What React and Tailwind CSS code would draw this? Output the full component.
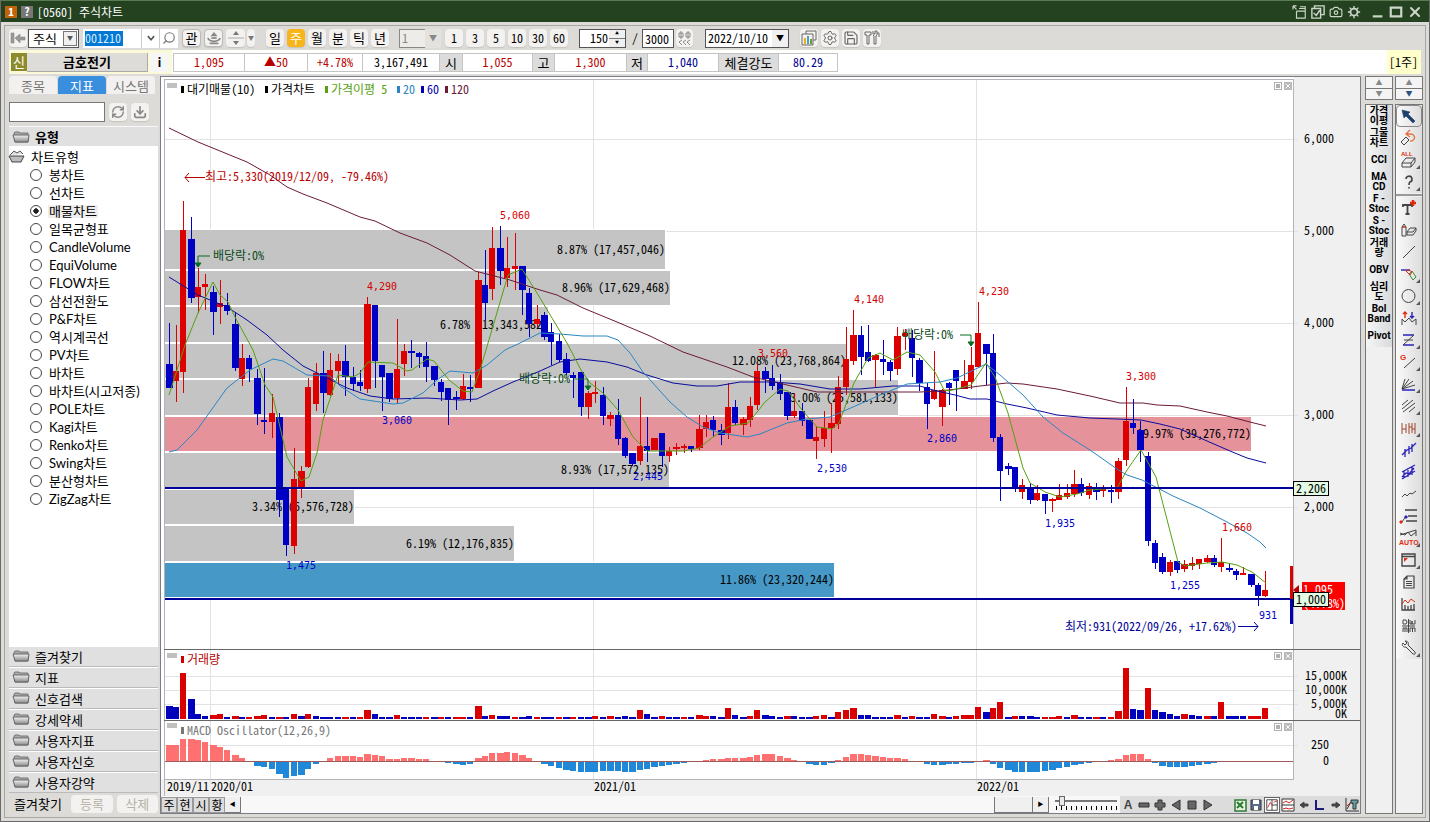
import { useState } from 'react';
import { Search, RefreshCw, Download, Settings, Save, Camera, X } from 'lucide-react';

// [high, bodyTop, bodyBottom, low, up]
const CANDLES = [
    [323, 364, 388, 388, 0], [325, 371, 381, 402, 1], [201, 230, 372, 393, 1], [217, 239, 298, 303, 0], [268, 287, 297, 313, 1],
    [274, 284, 287, 310, 1], [286, 292, 312, 335, 0], [280, 303, 307, 324, 1], [293, 305, 311, 315, 0], [312, 324, 368, 371, 0],
    [344, 358, 379, 386, 1], [355, 358, 369, 382, 0], [369, 378, 414, 425, 0], [368, 420, 422, 434, 0], [394, 413, 422, 438, 1],
    [413, 417, 500, 517, 0], [487, 487, 545, 556, 0], [448, 479, 546, 554, 1], [466, 471, 487, 498, 1], [378, 387, 467, 468, 1],
    [363, 373, 404, 411, 1], [351, 373, 393, 413, 0], [353, 370, 395, 396, 1], [354, 361, 371, 383, 1], [345, 361, 377, 396, 0],
    [367, 377, 384, 391, 0], [370, 382, 386, 391, 0], [297, 304, 389, 393, 1], [305, 305, 361, 388, 0], [365, 365, 377, 411, 0],
    [373, 373, 399, 402, 0], [319, 369, 398, 404, 1], [344, 351, 364, 376, 1], [340, 351, 353, 368, 0], [352, 353, 357, 368, 0],
    [342, 356, 367, 382, 0], [366, 366, 380, 386, 0], [379, 382, 392, 401, 0], [388, 388, 400, 425, 0], [391, 397, 399, 410, 0],
    [374, 386, 399, 400, 1], [375, 387, 388, 402, 0], [272, 280, 388, 388, 1], [250, 285, 303, 320, 0], [227, 248, 289, 300, 1],
    [226, 248, 271, 285, 0], [237, 268, 278, 287, 1], [233, 266, 269, 290, 1], [266, 266, 290, 315, 0], [288, 293, 324, 337, 0],
    [305, 319, 324, 327, 1], [312, 315, 337, 340, 0], [323, 332, 342, 365, 0], [334, 341, 360, 362, 0], [353, 359, 373, 375, 0],
    [372, 375, 378, 398, 0], [372, 372, 407, 416, 0], [391, 393, 407, 419, 1], [381, 392, 394, 403, 1], [387, 395, 416, 425, 0],
    [412, 415, 419, 426, 1], [399, 415, 439, 445, 0], [437, 438, 456, 458, 0], [453, 453, 464, 466, 0], [397, 446, 461, 465, 1],
    [417, 446, 451, 462, 0], [438, 438, 450, 450, 1], [433, 433, 456, 467, 0], [447, 451, 456, 462, 1], [443, 447, 449, 455, 1],
    [444, 446, 448, 453, 1], [446, 446, 449, 452, 0], [415, 429, 448, 450, 1], [415, 422, 429, 437, 1], [416, 420, 430, 437, 0],
    [424, 430, 435, 445, 0], [383, 407, 433, 439, 1], [400, 407, 423, 425, 0], [417, 419, 425, 435, 1], [397, 406, 420, 427, 1],
    [364, 371, 405, 410, 1], [367, 371, 379, 393, 0], [365, 378, 386, 390, 0], [374, 383, 394, 400, 0], [392, 392, 416, 420, 0],
    [393, 411, 416, 418, 1], [403, 411, 421, 426, 0], [420, 420, 439, 439, 0], [427, 437, 441, 459, 1], [411, 428, 439, 447, 1],
    [403, 423, 428, 453, 1], [376, 387, 424, 429, 1], [327, 359, 387, 395, 1], [310, 335, 361, 365, 1], [326, 335, 357, 375, 0],
    [325, 352, 361, 362, 0], [354, 355, 360, 387, 1], [340, 359, 362, 375, 0], [360, 362, 371, 381, 0], [327, 336, 369, 375, 1],
    [329, 333, 336, 350, 1], [330, 338, 358, 377, 0], [358, 360, 383, 391, 0], [383, 387, 404, 429, 0], [351, 390, 399, 400, 1],
    [389, 390, 407, 426, 1], [382, 383, 388, 405, 0], [370, 370, 381, 411, 0], [360, 381, 389, 389, 1], [347, 365, 382, 389, 1],
    [302, 333, 367, 367, 1], [344, 344, 354, 385, 0], [334, 353, 438, 442, 0], [434, 437, 471, 501, 0], [463, 466, 469, 475, 0],
    [467, 467, 488, 492, 0], [479, 485, 492, 499, 1], [483, 487, 500, 504, 0], [485, 493, 500, 501, 1], [494, 494, 501, 514, 0],
    [498, 499, 501, 512, 1], [484, 495, 500, 500, 1], [484, 493, 497, 499, 1], [470, 484, 494, 497, 1], [478, 484, 493, 496, 0],
    [483, 486, 495, 499, 1], [483, 489, 492, 500, 0], [485, 489, 491, 497, 1], [485, 490, 491, 503, 0], [458, 461, 492, 499, 1],
    [387, 421, 460, 466, 1], [399, 423, 428, 434, 0], [421, 430, 450, 462, 0], [452, 456, 541, 546, 0], [540, 543, 563, 569, 0],
    [553, 557, 572, 574, 0], [560, 562, 572, 576, 1], [561, 561, 570, 573, 0], [560, 564, 569, 572, 1], [557, 563, 566, 570, 1],
    [559, 559, 564, 569, 1], [555, 558, 562, 563, 1], [555, 558, 565, 567, 0], [538, 562, 567, 572, 1], [564, 568, 570, 572, 0],
    [569, 571, 575, 580, 0], [567, 573, 575, 575, 1], [574, 574, 585, 587, 0], [583, 585, 596, 606, 0], [571, 590, 596, 597, 1],
];

const VOLUMES = [
    13, 12, 46, 20, 5, 3, 4, 5, 2, 3, 2, 2, 3, 4, 2, 2, 2, 5, 3, 5, 3, 2, 2, 2, 2, 2, 2, 9, 5, 2,
    2, 4, 2, 2, 2, 2, 2, 2, 2, 2, 2, 2, 13, 3, 4, 3, 3, 2, 2, 3, 2, 2, 2, 2, 2, 2, 2, 2, 3, 2,
    3, 2, 3, 2, 9, 5, 2, 3, 2, 2, 2, 2, 4, 3, 3, 2, 11, 4, 2, 3, 9, 4, 3, 2, 3, 3, 2, 2, 3, 4,
    2, 7, 9, 11, 4, 4, 2, 2, 2, 4, 2, 3, 2, 2, 5, 3, 2, 3, 4, 4, 12, 7, 11, 17, 2, 3, 3, 3, 2, 2,
    2, 3, 2, 4, 2, 2, 2, 2, 2, 8, 51, 10, 9, 31, 9, 7, 5, 3, 5, 4, 3, 3, 3, 17, 3, 3, 3, 3, 3, 11,
];

const VOLUME_SIGNS =
    'bbrbbbrrbrbrrrbrbrbrbbbbrbrrbb' +
    'brbbbrbrbrrbrbrbbrbbrbbrbrbbrb' +
    'rbbbrbbrbbrbrrbbrbbrrbbbrbbbrr' +
    'brrrbbbbbrbrbbrrbrrrrbrrbrbbbr' +
    'rrbrbbrbrrrbbrbbbbrbbrbrbbbrrr';

const MACD = [
    16, 16, 22, 22, 21, 19, 16, 14, 11, 6, 3, 0, -5, -6, -8, -13, -17, -15, -14, -8, -3, 0, 3, 5, 5, 5, 4, 7, 6, 5,
    2, 2, 3, 3, 2, 2, 0, -1, -2, -3, -4, -3, 3, 5, 8, 8, 9, 8, 6, 3, -1, -3, -5, -7, -9, -10, -11, -11, -11, -10,
    -10, -10, -11, -11, -9, -8, -6, -5, -4, -3, -2, -1, 0, 1, 2, 2, 3, 3, 3, 4, 6, 7, 7, 5, 3, 1, -1, -3, -4, -4,
    -2, 1, 4, 7, 7, 6, 5, 4, 3, 3, 2, 0, -1, -3, -4, -4, -3, -3, -2, -2, 0, 1, -3, -7, -9, -11, -11, -11, -11, -10,
    -9, -7, -6, -4, -3, -2, -1, 0, 1, 2, 6, 7, 7, 2, -2, -5, -6, -6, -6, -5, -4, -3, -2, -1, -1, -1, 0, 0, -1, 0,
];

const MA_LINES = [
    {
        color: '#6b1a3a',
        points: '169,128 198,142 247,162 270,175 287,187 303,194 327,203 360,217 375,221 400,233 427,243 450,255 475,271 510,280 540,290 557,295 583,308 617,322 650,336 683,352 727,367 753,377 787,385 817,392 860,392 920,392 940,391 957,389 980,386 1007,383 1023,384 1057,389 1090,396 1120,403 1143,403 1157,405 1180,406 1207,412 1227,416 1250,422 1266,426',
    },
    {
        color: '#0a0aa0',
        points: '169,277 198,295 227,307 247,320 267,335 283,350 303,366 327,378 347,388 370,396 393,399 427,398 460,400 477,399 493,391 513,382 540,371 560,362 580,359 607,362 627,367 647,375 673,383 697,386 717,386 740,382 773,382 800,384 830,389 860,389 893,386 920,386 933,390 955,395 970,399 987,399 1007,404 1027,408 1057,415 1090,418 1117,419 1141,420 1160,424 1180,429 1207,441 1230,451 1247,458 1266,463',
    },
    {
        color: '#2a86c4',
        points: '169,452 177,450 197,430 227,388 250,370 273,359 283,361 307,375 330,376 340,386 360,399 393,404 403,403 423,393 437,380 450,371 473,373 487,365 505,350 520,343 540,333 560,334 583,336 607,336 618,340 630,353 643,372 670,402 687,417 703,427 720,433 747,437 760,434 787,423 807,419 830,417 853,407 880,395 907,384 940,382 957,378 986,364 1000,375 1023,395 1043,417 1063,433 1090,450 1117,469 1127,475 1142,480 1173,496 1200,508 1227,522 1247,533 1260,542 1266,548',
    },
    {
        color: '#56a010',
        points: '169,395 185,345 198,313 213,282 220,295 228,302 235,317 253,350 265,385 273,397 287,457 301,481 309,477 317,453 323,420 338,375 353,377 360,373 368,362 393,363 407,371 412,370 427,359 434,361 449,380 463,391 472,392 480,370 486,350 508,275 522,269 537,293 567,343 581,370 590,383 603,393 618,410 633,437 647,451 683,451 699,448 713,437 730,426 748,423 758,411 765,402 780,389 788,391 802,410 817,427 832,429 839,423 854,383 868,358 880,353 893,360 907,352 920,355 935,372 944,390 949,391 971,385 986,363 995,377 1008,413 1023,468 1030,483 1045,492 1060,497 1077,494 1090,490 1117,488 1127,470 1141,450 1156,477 1178,562 1185,566 1207,563 1222,562 1237,565 1252,572 1266,583',
    },
];

// price zones: y, height, right edge, label
const ZONES = [
    [230, 39, 665, '8.87% (17,457,046)', '#c4c4c4'],
    [271, 34, 670, '8.96% (17,629,468)', '#c4c4c4'],
    [307, 35, 548, '6.78% (13,343,582)', '#c4c4c4'],
    [344, 34, 846, '12.08% (23,768,864)', '#c4c4c4'],
    [380, 35, 898, '13.00% (25,581,133)', '#c4c4c4'],
    [417, 34, 1251, '19.97% (39,276,772)', '#e5929a'],
    [453, 34, 669, '8.93% (17,572,135)', '#c4c4c4'],
    [490, 34, 354, '3.34% (6,576,728)', '#c4c4c4'],
    [526, 35, 514, '6.19% (12,176,835)', '#c4c4c4'],
    [563, 34, 834, '11.86% (23,320,244)', '#4698c6'],
];

const HIGHS = [[367, 290, '4,290'], [500, 219, '5,060'], [758, 357, '3,560'], [854, 303, '4,140'], [979, 295, '4,230'], [1126, 380, '3,300'], [1222, 531, '1,660']];
const LOWS = [[286, 569, '1,475'], [382, 424, '3,060'], [633, 480, '2,445'], [817, 472, '2,530'], [927, 442, '2,860'], [1045, 527, '1,935'], [1170, 589, '1,255'], [1259, 619, '931']];

const DIVIDENDS = [
    { x: 213, y: 260, line: '210,256 198,256 198,266', tip: '195,263 198,267 201,263' },
    { x: 519, y: 383, line: '574,379 588,379 588,389', tip: '585,386 588,390 591,386' },
    { x: 902, y: 339, line: '960,335 971,335 971,345', tip: '968,342 971,346 974,342' },
];

const PRICE_TICKS = [[139, '6,000'], [231, '5,000'], [323, '4,000'], [415, '3,000'], [507, '2,000']];
const MONTHS = [[167, '2019/11'], [211, '2020/01'], [594, '2021/01'], [977, '2022/01']];

const LEGEND = [
    [181, '#000000', '대기매물(10)'],
    [265, '#000000', '가격차트'],
    [325, '#56a010', '가격이평 5'],
    [397, '#2a86c4', '20'],
    [421, '#0000b0', '60'],
    [445, '#6b1a3a', '120'],
];

const CHART_TYPES = [
    '봉차트', '선차트', '매물차트', '일목균형표', 'CandleVolume', 'EquiVolume', 'FLOW차트', '삼선전환도', 'P&F차트', '역시계곡선',
    'PV차트', '바차트', '바차트(시고저종)', 'POLE차트', 'Kagi차트', 'Renko차트', 'Swing차트', '분산형차트', 'ZigZag차트',
];

const GROUPS = ['즐겨찾기', '지표', '신호검색', '강세약세', '사용자지표', '사용자신호', '사용자강약'];

const QUOTE = [
    { text: '1,095', cls: 'w-[71px] text-[#b80000]' },
    { text: '▲50', cls: 'w-[63px] text-[#b80000]' },
    { text: '+4.78%', cls: 'w-[55px] text-[#b80000]' },
    { text: '3,167,491', cls: 'w-[77px] text-black' },
    { text: '시', cls: 'w-[23px]', head: true },
    { text: '1,055', cls: 'w-[70px] text-[#b80000]' },
    { text: '고', cls: 'w-[22px]', head: true },
    { text: '1,300', cls: 'w-[72px] text-[#b80000]' },
    { text: '저', cls: 'w-[21px]', head: true },
    { text: '1,040', cls: 'w-[71px] text-[#000090]' },
    { text: '체결강도', cls: 'w-[60px]', head: true },
    { text: '80.29', cls: 'w-[59px] text-[#000090]' },
];

const INDICATORS = [
    ['가격', '이평'], ['그물', '차트'], ['CCI'], ['MA', 'CD'], ['F -', 'Stoc'], ['S -', 'Stoc'], ['거래', '량'], ['OBV'], ['심리', '도'], ['Bol', 'Band'], ['Pivot'],
];

const G = '#444444';
const B = '#2a22b8';
const R = '#e02a10';

const DRAW_TOOLS = [
    { name: '선택', more: false, icon: <path d="M1 2l2 8 2-2 7 7 2-2-7-7 2-2z" fill="#1d3f6e" stroke="#1d3f6e" strokeWidth=".6" /> },
    { name: '지우기', more: false, icon: <><path d="M0 12l5-5 3 3-5 5z" stroke={G} /><path d="M6 4h4a4 3.500 0 1 1-1 7M9 0L5 4l4 3" stroke="#e8703a" strokeWidth="1.3" /></> },
    { name: '전체지우기', more: true, icon: <><text x="0" y="4" fontSize="6" fontWeight="700" fill={R} stroke="none">ALL</text><path d="M1 11l4-5h9l-4 5zM1 11v4h9l4-5V6M10 11v4" stroke={G} /></> },
    { name: '도움말', more: true, icon: <path d="M5 5a3 3 0 1 1 4 3c-1 .5-1 1-1 3M8 13v1.500" stroke={G} strokeWidth="1.6" /> },
    null,
    { name: '문자', more: false, icon: <><path d="M2 7V5h9v2M6.500 5v9M4.500 14h4" stroke={G} strokeWidth="1.8" /><path d="M12 0v6M9 3h6" stroke={R} strokeWidth="2.500" /></> },
    { name: '도형', more: false, icon: <><path d="M1 5h4v9H1zM1 5l2-3 2 3" stroke={G} /><path d="M1 5h4" stroke={R} /><path d="M6 10l3-4h6l-3 4zM6 10v3h6l3-4V6" stroke={G} /></> },
    { name: '추세선', more: false, icon: <path d="M2 14L14 2" stroke={G} /> },
    { name: '선편집', more: true, icon: <><path d="M0 4h9" stroke={B} strokeWidth="1.4" /><path d="M8 8l3-3 4 6-3 3z" stroke="#3a8a3a" /><path d="M5 5l3-1 3 2-2 3z" stroke={R} /></> },
    { name: '원', more: true, icon: <circle cx="7.500" cy="8" r="6.500" stroke={G} /> },
    { name: '고저', more: false, icon: <><path d="M1 15V9l3 3 4-4 3 4 4-3v6" stroke={G} /><path d="M4 8V2M2 4l2-2 2 2" stroke={R} strokeWidth="1.4" /><path d="M11 2v6M9 6l2 2 2-2" stroke={B} strokeWidth="1.4" /></> },
    { name: '지그재그', more: true, icon: <><path d="M2 3h11M2 13h11" stroke={B} strokeWidth="1.4" /><path d="M13 3L2 13M3 8h9" stroke={G} /></> },
    { name: '각도선', more: true, icon: <><text x="-1" y="6" fontSize="8" fontWeight="700" fill={R} stroke="none">G</text><path d="M3 14L14 4" stroke={G} /></> },
    { name: '부채꼴', more: true, icon: <><path d="M1 13L4 3M1 13l7-10M1 13l11-8M1 13l13-4" stroke={G} /><path d="M1 14h13" stroke={B} strokeWidth="1.5" /></> },
    { name: '평행선', more: true, icon: <path d="M1 7l6-5M1 11L12 2M2 14L14 5M8 14l6-5" stroke={G} /> },
    { name: '주기선', more: true, icon: <path d="M1 3v11M1 9h4M5 4v9M8 3v11M8 7h3M11 3v10M14 3v11M11 9h3" stroke="#a0442a" /> },
    { name: '채널', more: false, icon: <path d="M1 13l5-5 4-2 5-5M4 7v8M8 4v8M11 2v8" stroke={B} strokeWidth="1.3" /> },
    { name: '이중채널', more: false, icon: <path d="M1 15L14 7M1 8L14 1M3 7v7M7 4v9M11 2v9M1 13l4-4 3 1 5-6" stroke={B} strokeWidth="1.3" /> },
    { name: '파동', more: false, icon: <path d="M1 11l3-3 2 2 3-3 2 1 4-3" stroke={G} /> },
    { name: '되돌림', more: false, icon: <><path d="M4 2h12M7 8h9M5 13h11" stroke={G} strokeWidth="1.3" /><path d="M1 14l4-6" stroke={G} /><path d="M-1 13h2v2h-2z" fill={R} stroke={R} /><path d="M4 8h2v2H4z" fill={B} stroke={B} /></> },
    { name: '자동', more: true, icon: <><path d="M-1 5L15 0v6M-1 3l5 2 3-3 3 4 5-4" stroke={G} /><text x="-2" y="15" fontSize="7" fontWeight="700" fill={R} stroke="none">AUTO</text></> },
    { name: '창', more: true, icon: <><path d="M1 2h13v12H1zM1 4.500h13" stroke={G} strokeWidth="1.4" /><path d="M3 6h4L3 10z" fill={R} stroke="none" /></> },
    { name: '메모', more: false, icon: <path d="M6 2h7v12H3V5zM6 2v3H3M5 7.500h6M5 9.500h6M5 11.500h6" stroke={G} strokeWidth="1.2" /> },
    { name: '차트', more: false, icon: <><path d="M1 2v12h13M4 14V9M7 14v-4M10 14V9M13 14V8" stroke={G} strokeWidth="1.3" /><path d="M1 8l3-4 3 3 3-4 4 3" stroke={R} /></> },
    { name: 'DWM', more: false, icon: <path d="M2 2v4h3l1-2-1-2zM9 2v4h2V3v3h3V2M1 8h13M7.500 1v14M2 14v-4h4v4M4 10v4M9 14v-4h5v4M11.500 10v4" stroke={G} /> },
    { name: '설정', more: true, icon: <path d="M2 3l2 2 2-2-2-2c3 0 4 2 3 4l7 7c1 2-1 3-2 2L5 7C3 8 0 5 2 3z" stroke={G} /> },
];

const chip = 'flex items-center justify-center h-[18px] rounded-sm bg-[#f3f2f0] shadow-[0_1px_1px_#c4c2be]';

function Icon({ children, size = 'size-4' }) {
    return <svg className={`${size} shrink-0 overflow-visible font-['Liberation_Sans',sans-serif]`} viewBox="0 0 16 16" fill="none">{children}</svg>;
}

function Folder() {
    return (
        <Icon>
            <path d="M1 4l1-1h4l1 1h8v9H2z" fill="#aaa" stroke="#777" />
            <path d="M0 6h16l-1 7H2z" fill="url(#folderFill)" stroke="#666" />
            <defs>
                <linearGradient id="folderFill" x1="0" y1="0" x2="0" y2="1">
                    <stop offset="0" stopColor="#f4f4f4" />
                    <stop offset="1" stopColor="#8a8a8a" />
                </linearGradient>
            </defs>
        </Icon>
    );
}

function TitleBar() {
    return (
        <header className="flex items-center h-[22px] px-1 bg-[#24421f] border-t border-[#5a7a52] text-white">
            <span className="flex items-center justify-center size-3 bg-[#c0640c] text-[11px] font-bold">1</span>
            <span className="flex items-center justify-center size-3 ml-1 bg-[#777] text-[11px] font-bold">?</span>
            <h1 className="ml-1 text-xs">[0560] 주식차트</h1>
            <div className="flex items-center gap-1 ml-auto mr-0.5 text-[#cdd6ca]">
                <button aria-label="분리"><Icon size="size-3.5"><path d="M0 1h4M0 1v4M0 1l4 4M4 7v8h10V4H7M4 7h10M8 2h6v2" stroke="currentColor" strokeWidth="1.3" /></Icon></button>
                <button aria-label="복사"><Icon size="size-3.5"><path d="M1 4h10v11H1zM4 4V1h11v10h-4M3 9l3 3 4-6" stroke="currentColor" strokeWidth="1.6" /></Icon></button>
                <button aria-label="캡처"><Camera className="size-3.5" /></button>
                <button aria-label="설정"><Icon size="size-3.5"><circle cx="8" cy="8" r="4" stroke="currentColor" strokeWidth="2" /><path d="M8 1v3M8 12v3M1 8h3M12 8h3M3 3l2 2M11 11l2 2M3 13l2-2M11 5l2-2" stroke="currentColor" strokeWidth="1.6" /></Icon></button>
                <button aria-label="최소화" className="ml-1.5"><Icon size="size-3.5"><path d="M2 13h11" stroke="currentColor" strokeWidth="2.500" /></Icon></button>
                <button aria-label="최대화"><Icon size="size-3.5"><path d="M2 3h12v10H2z" stroke="currentColor" strokeWidth="2.500" /></Icon></button>
                <button aria-label="닫기"><X className="size-4" strokeWidth={3} /></button>
            </div>
        </header>
    );
}

function Toolbar() {
    const [period, setPeriod] = useState('주');
    return (
        <div className="flex items-center h-6 px-1 text-xs">
            <button aria-label="이전" className={`${chip} w-[18px]`}>
                <Icon><path d="M1 3h3v10H1zM5 8l5-4v3h5v3h-5v3z" fill="#999" stroke="#888" strokeWidth=".6" /></Icon>
            </button>
            <div className="relative ml-px">
                <select aria-label="종류" className="appearance-none w-[51px] h-[19px] pl-1 bg-white border border-[#555] text-[13px] leading-none">
                    <option>주식</option>
                </select>
                <span className="absolute right-0.5 top-0.5 flex items-center justify-center w-3.5 h-[15px] border border-[#777] bg-[#f0f0f0] text-[6px] text-[#555] pointer-events-none">▼</span>
            </div>
            <div className="flex items-center ml-1 h-[19px] bg-white">
                <input aria-label="종목코드" defaultValue="001210" className="w-[38px] h-[15px] ml-0.5 bg-[#0078d4] text-[#d8ecff]" />
                <button aria-label="종목 목록" className="flex items-center justify-center w-[18px] h-full ml-[18px] border-l border-[#ccc]">
                    <Icon size="size-2.5"><path d="M3 5l5 6 5-6" stroke="#555" strokeWidth="2.500" /></Icon>
                </button>
                <button aria-label="검색" className="flex items-center justify-center w-[19px] h-full border-l border-[#ccc]"><Search className="size-3.5 -scale-x-100" color="#777" /></button>
            </div>
            <button className={`${chip} w-[19px] ml-1 border border-[#bbb] text-[13px]`}>관</button>
            <button aria-label="투자자" className={`${chip} w-[19px] ml-[3px] border border-[#bbb]`}>
                <Icon size="size-3.5"><path d="M8 1l4 5H4z" fill="#888" /><path d="M1 8c2 5 12 5 14 0M3 14h10" stroke="#888" strokeWidth="2" /><path d="M5 8h6" stroke="#888" strokeWidth="2" /></Icon>
            </button>
            <button aria-label="위아래" className={`${chip} w-[19px] ml-[3px]`}>
                <Icon><path d="M8 1l3 4H5zM8 15l3-4H5z" fill="#777" /><path d="M0 8h16" stroke="#aaa" /></Icon>
            </button>
            <button aria-label="더보기" className={`${chip} w-2 ml-0.5 text-[6px] text-[#777]`}>▼</button>
            <div className="flex gap-[3px] ml-[11px]">
                {['일', '주', '월', '분', '틱', '년'].map(p => (
                    <button
                        key={p}
                        onClick={() => setPeriod(p)}
                        className={`${chip} w-[18px] text-[13px] ${period === p ? '!bg-[#f7b51c] text-white' : ''}`}
                    >
                        {p}
                    </button>
                ))}
            </div>
            <div className="relative ml-[10px]">
                <select aria-label="주기" disabled className="appearance-none w-[42px] h-[19px] pl-0.5 bg-[#eeece8] border border-[#888] text-[#888] opacity-100">
                    <option>1</option>
                </select>
                <span className="absolute right-0 top-0 flex items-center justify-center w-4 h-[19px] bg-[#e4e2de] text-[8px] text-[#888] pointer-events-none">▼</span>
            </div>
            <div className="flex gap-[3px] ml-1">
                {['1', '3', '5', '10', '30', '60'].map(n => <button key={n} className={`${chip} w-[18px]`}>{n}</button>)}
            </div>
            <div className="flex h-[19px] ml-[11px] bg-white border border-[#555]">
                <input aria-label="표시 봉수" defaultValue="150" className="w-7 text-right" />
                <div className="flex flex-col w-4 ml-px bg-[#f0f0f0] text-[4px]">
                    <button aria-label="증가" className="flex-1 border-b border-[#777]">▲</button>
                    <button aria-label="감소" className="flex-1">▼</button>
                </div>
            </div>
            <span className="ml-1.5">/</span>
            <input aria-label="전체 봉수" defaultValue="3000" className="w-8 h-[19px] ml-1 pl-0.5 bg-white border border-[#555] leading-none" />
            <button aria-label="봉 조절" className={`${chip} w-[17px] ml-0.5`}>
                <Icon><path d="M4 1v8M2 3h4v4H2zM11 1v8M9 3h4v4H9zM5 10l-3 2 3 3M9 10l-3 2 3 3M13 10l-3 2 3 3" stroke="#888" /></Icon>
            </button>
            <div className="relative ml-3">
                <select aria-label="기준일" className="appearance-none w-[84px] h-[19px] pl-0.5 bg-white border border-[#555]">
                    <option>2022/10/10</option>
                </select>
                <span className="absolute right-px top-px flex items-center justify-center w-4 h-[17px] bg-[#f0f0f0] text-[8px] pointer-events-none">▼</span>
            </div>
            <div className="flex gap-[3px] ml-[11px]">
                <button aria-label="차트 종류" className={`${chip} w-[18px]`}><Icon><path d="M5 4V1h10v9h-3M1 4h11v11H1z" stroke="#666" /><path d="M3 8h2v6H3z" fill="#e8b020" /><path d="M6 6h2v8H6z" fill="#4aa0c0" /><path d="M9 9h2v5H9z" fill="#60a040" /></Icon></button>
                <button aria-label="환경설정" className={`${chip} w-[18px]`}><Settings className="size-4" color="#666" strokeWidth={1.5} /></button>
                <button aria-label="저장" className={`${chip} w-[18px]`}><Save className="size-4" color="#666" strokeWidth={1.7} /></button>
                <button aria-label="도구" className={`${chip} w-[18px]`}><Icon><path d="M1 2h6v3H5v9H3V5H1zM9 1v3h2V1h2v4l-1 1v8h-2V6L9 5M13 3h2v4" stroke="#666" /></Icon></button>
            </div>
        </div>
    );
}

function QuoteBar() {
    return (
        <div className="flex items-stretch h-6 mx-1 bg-white text-xs">
            <div className="flex items-center w-[163px] shrink-0 p-0.5 bg-[#fafad8]">
                <span className="flex items-center justify-center w-4 h-[18px] bg-[#8d8a2c] text-white text-[13px]">신</span>
                <button className="w-[121px] h-[19px] bg-[#dddcd8] border-r border-b border-[#aaa] text-[13px] font-bold">금호전기</button>
                <button aria-label="종목정보" className="w-[19px] h-[19px] ml-0.5 bg-[#f6f6f6] font-bold">i</button>
            </div>
            <table className="self-center ml-px table-fixed border-collapse text-center">
                <tbody>
                    <tr className="h-[18px]">
                        {QUOTE.map(q => q.head
                            ? <th key={q.text} scope="col" className={`${q.cls} h-[18px] p-0 border border-[#c4c4c4] bg-[#dcdcdc] text-[13px] font-normal leading-none`}>{q.text}</th>
                            : <td key={q.text} className={`${q.cls} h-[18px] p-0 border border-[#c4c4c4] leading-none`}>{q.text}</td>)}
                    </tr>
                </tbody>
            </table>
            <span className="flex items-center ml-auto w-[34px] pl-0.5 bg-[#ffffcc] text-xs">[1주]</span>
        </div>
    );
}

function Sidebar() {
    const [type, setType] = useState('매물차트');
    return (
        <aside className="flex flex-col w-[149px] shrink-0 ml-1 text-[13px]">
            <div className="flex gap-px h-[18px]">
                <button className="w-12 rounded-t-sm bg-[#f2f1ef] leading-none text-[#777]">종목</button>
                <button className="w-12 rounded-t-sm bg-[#3a8ede] leading-none text-white">지표</button>
                <button className="w-12 rounded-t-sm bg-[#f2f1ef] leading-none text-[#777]">시스템</button>
            </div>
            <div className="flex items-center gap-1 mt-2 h-5">
                <input aria-label="지표 검색" className="w-24 h-5 bg-white border border-[#777]" />
                <button aria-label="새로고침" className={`${chip} w-[18px]`}><RefreshCw className="size-3.5" color="#888" strokeWidth={2.5} /></button>
                <button aria-label="내려받기" className={`${chip} w-[18px]`}><Download className="size-3.5" color="#888" strokeWidth={3} /></button>
            </div>
            <h2 className="flex items-center gap-1.5 h-5 mt-1 pl-1 bg-[#e0e0e0] border-t border-[#f8f8f8] font-bold"><Folder />유형</h2>
            <div className="flex-1 bg-white">
                <p className="flex items-center gap-1.5 h-5">
                    <Icon><path d="M1 7l4-4 3 2 3-2 3 3" fill="#ddd" stroke="#555" /><path d="M0 8h15l-3 6H3z" fill="#bbb" stroke="#444" /></Icon>
                    차트유형
                </p>
                {CHART_TYPES.map(t => (
                    <label key={t} className="flex items-center gap-1.5 h-[18px] pl-[21px]">
                        <input
                            type="radio"
                            name="chartType"
                            checked={type === t}
                            onChange={() => setType(t)}
                            className="appearance-none size-3 rounded-full border border-[#444] bg-white checked:bg-[radial-gradient(#222_35%,white_40%)]"
                        />
                        <span className={`px-px font-['Lato','Noto_Sans_CJK_KR',sans-serif] [font-feature-settings:normal] ${type === t ? 'bg-[#eee]' : ''}`}>{t}</span>
                    </label>
                ))}
            </div>
            {GROUPS.map(g => (
                <button key={g} className="flex items-center gap-1.5 h-[21px] pl-1 bg-[#e0e0e0] border-b border-[#bbb] shadow-[inset_0_1px_0_#fff]">
                    <Folder />{g}
                </button>
            ))}
            <div className="flex items-center gap-1 h-[21px] pl-[5px]">
                <span className="w-[50px]">즐겨찾기</span>
                <button disabled className="w-[42px] h-[18px] ml-1 rounded-sm bg-[#f3f2f0] leading-none text-[#b5b2a8]">등록</button>
                <button disabled className="w-[42px] h-[18px] rounded-sm bg-[#f3f2f0] leading-none text-[#b5b2a8]">삭제</button>
            </div>
        </aside>
    );
}

const xAt = i => 169 + 7.362 * i;

function StockChart() {
    return (
        <svg className="block w-full h-auto text-xs" viewBox="161 77 1199 719" role="img" aria-label="금호전기 주봉 차트">
            <rect x="161" y="77" width="1199" height="719" fill="#f0f0f0" />
            <rect x="161" y="77" width="1133" height="702" fill="white" />

            {/* grid */}
            <g stroke="#e2e2e2" shapeRendering="crispEdges">
                {PRICE_TICKS.map(([y]) => <path key={y} d={`M165 ${y}.5H1298`} />)}
                {[676, 690, 704, 745].map(y => <path key={y} d={`M165 ${y}.5H1298`} />)}
                {[210, 593, 976].map(x => <path key={x} d={`M${x}.5 80V784`} />)}
            </g>

            {/* price zones */}
            {ZONES.map(([y, h, right, label, color]) => (
                <g key={label}>
                    <rect x="164" y={y - 1} width={right - 163} height={h + 2} fill="white" />
                    <rect x="165" y={y} width={right - 165} height={h} fill={color} />
                </g>
            ))}
            {ZONES.map(([y, h, right, label]) => <text key={label} x={right} y={y + h / 2 + 4} textAnchor="end">{label}</text>)}

            {/* candles */}
            <g shapeRendering="crispEdges">
                {CANDLES.map(([high, top, bottom, low, up], i) => (
                    <g key={i} fill={up ? '#dd0000' : '#0000c4'}>
                        <rect x={Math.round(xAt(i) - 0.5)} y={high} width="1" height={Math.max(1, low - high)} />
                        <rect x={Math.round(xAt(i) - 3.5)} y={top} width={i % 3 ? 6 : 7} height={Math.max(2, bottom - top)} />
                    </g>
                ))}
            </g>

            {MA_LINES.map(l => <polyline key={l.color} points={l.points} fill="none" stroke={l.color} />)}

            <path d="M165 488H1293M165 599H1293" stroke="#000098" strokeWidth="2" />

            {/* dividend marks */}
            {DIVIDENDS.map(d => (
                <g key={d.x} stroke="#0a6a20" fill="none">
                    <polyline points={d.line} />
                    <polygon points={d.tip} fill="#0a6a20" />
                    <text x={d.x} y={d.y} fill="#0a4a18" stroke="none">배당락:0%</text>
                </g>
            ))}

            <g className="font-['DejaVu_Sans_Mono',monospace] text-[10px]">
                {HIGHS.map(([x, y, t]) => <text key={t} x={x} y={y} fill="#d40000">{t}</text>)}
                {LOWS.map(([x, y, t]) => <text key={t} x={x} y={y} fill="#0000c8">{t}</text>)}
            </g>
            <path d="M205 177.500H185M189 173l-4 4.500 4 4.500" fill="none" stroke="#b80000" />
            <text x="205" y="181" fill="#b80000">최고:5,330(2019/12/09, -79.46%)</text>
            <text x="1237" y="631" fill="#000098" textAnchor="end">최저:931(2022/09/26, +17.62%)</text>
            <path d="M1238 626.500h20M1254 622l4 4.500-4 4.500" fill="none" stroke="#000098" />

            {/* volume */}
            <g shapeRendering="crispEdges">
                {VOLUMES.map((v, i) => (
                    <rect key={i} x={Math.round(xAt(i) - 3.5)} y={719 - v} width={i % 3 ? 6 : 7} height={v} fill={VOLUME_SIGNS[i] === 'r' ? '#d80000' : '#0000bc'} />
                ))}
            </g>

            {/* macd oscillator */}
            <g shapeRendering="crispEdges">
                {MACD.map((v, i) => (
                    <rect key={i} x={Math.round(xAt(i) - 3.5)} y={v > 0 ? 761 - v : 761} width={i % 3 ? 6 : 7} height={Math.abs(v)} fill={v > 0 ? '#ff7070' : '#2088d8'} />
                ))}
                <path d="M165 761.500H1293" stroke="#a05a5a" strokeWidth="1" />
            </g>

            {/* frames */}
            <g fill="none" shapeRendering="crispEdges">
                <path d="M164.500 796V79.500H1293.500V779.500H164.500" stroke="#b4b4b8" />
                <path d="M164 649.500H1360M164 720.500H1360" stroke="#666" />
            </g>

            {/* legends */}
            {[83, 653, 723].map(y => <rect key={y} x="167" y={y} width="10" height="5" fill="#c0c0c0" />)}
            {LEGEND.map(([x, color, label]) => (
                <g key={x} fill={color}>
                    <rect x={x} y="86" width="3" height="7" />
                    <text x={x + 6} y="94">{label}</text>
                </g>
            ))}
            <rect x="181" y="656" width="3" height="7" fill="#d00000" />
            <text x="187" y="664" fill="#b80000">거래량</text>
            <rect x="181" y="727" width="3" height="7" fill="#777" />
            <text x="187" y="735" fill="#777">MACD Oscillator(12,26,9)</text>

            {/* axis */}
            {PRICE_TICKS.map(([y, t]) => <text key={t} x="1304" y={y + 4}>{t}</text>)}
            <g textAnchor="end">
                <text x="1347" y="680">15,000K</text>
                <text x="1347" y="694">10,000K</text>
                <text x="1347" y="708">5,000K</text>
                <text x="1347" y="718">0K</text>
                <text x="1329" y="749">250</text>
                <text x="1329" y="765">0</text>
            </g>
            {MONTHS.map(([x, t]) => <text key={t} x={x} y="791">{t}</text>)}
            <rect x="1290" y="566" width="3" height="33" fill="#dd0000" />
            <rect x="1290" y="599" width="3" height="25" fill="#0000b0" />
            <path d="M1293 590l6-5v10z" fill="#b80000" />
            <rect x="1302" y="582" width="43" height="28" fill="#ff0000" />
            <text x="1303" y="594" fill="white">1,095</text>
            <text x="1303" y="608" fill="white">(4.78%)</text>
            <rect x="1293.500" y="592.500" width="35" height="14" fill="#e2fbe2" stroke="#000" />
            <text x="1296" y="604">1,000</text>
            <rect x="1293.500" y="481.500" width="35" height="14" fill="#e2fbe2" stroke="#000" />
            <text x="1296" y="493">2,206</text>
        </svg>
    );
}

function PaneButtons({ className }) {
    return (
        <div className={`absolute right-[68px] flex gap-0.5 ${className}`}>
            <button aria-label="창 축소" className="flex items-center justify-center size-2 border border-[#b0b0b0]"><span className="size-1 bg-[#b0b0b0]" /></button>
            <button aria-label="창 닫기" className="flex items-center justify-center size-2 bg-[#b8b8b8] text-white"><X className="size-2" strokeWidth={3} /></button>
        </div>
    );
}

function ChartFooter() {
    return (
        <div className="flex items-center h-[17px] bg-[#f8f8f8] text-xs">
            {['주', '현', '시', '황'].map(t => (
                <button key={t} className="w-4 h-4 border border-[#999] bg-[#dcdcdc] leading-none">{t}</button>
            ))}
            <button aria-label="왼쪽으로" className="w-4 h-4 border-r border-b border-[#777] bg-[#f0f0f0] text-[6px]">◀</button>
            <div className="flex flex-1 justify-end"><div className="w-[39px] h-4 bg-[#f0f0f0] border-r border-b border-l border-[#777]" /></div>
            <button aria-label="오른쪽으로" className="w-4 h-4 border-r border-b border-[#777] bg-[#f0f0f0] text-[6px]">▶</button>
            <div className="flex flex-col justify-center w-[62px] ml-1.5">
                <input
                    type="range"
                    aria-label="확대"
                    defaultValue="8"
                    className="appearance-none w-full h-0.5 bg-[#777] [&::-webkit-slider-thumb]:appearance-none [&::-webkit-slider-thumb]:w-1.5 [&::-webkit-slider-thumb]:h-2.5 [&::-webkit-slider-thumb]:bg-[#e8e8e8] [&::-webkit-slider-thumb]:border [&::-webkit-slider-thumb]:border-[#666]"
                />
                <svg className="w-full h-1 mt-1" viewBox="0 0 62 4">
                    <path d="M1 2h61" stroke="black" strokeWidth="4" strokeDasharray="1 4" />
                </svg>
            </div>
            <div className="flex items-center h-full w-60 ml-[3px] bg-[#dcdcdc]">
                <button aria-label="자동" className="w-4 font-['Liberation_Sans',sans-serif] font-bold text-[#444]">A</button>
                {[
                    ['축소', <path d="M3 6h10v4H3z" />],
                    ['확대', <path d="M6 3h4v3h3v4h-3v3H6v-3H3V6h3z" />],
                    ['이전 재생', <path d="M12 3v10L4 8z" />],
                    ['정지', <path d="M4 4h8v8H4z" />],
                    ['재생', <path d="M4 3v10l8-5z" />],
                ].map(([name, shape]) => (
                    <button key={name} aria-label={name}><Icon><g fill="#666" stroke="#333">{shape}</g></Icon></button>
                ))}
                <div className="flex ml-auto">
                    <button aria-label="엑셀"><Icon><path d="M3 3h11v11H3z" fill="#e8f4e0" stroke="#2c7a34" strokeWidth="1.5" /><path d="M5 5l6 6M11 5l-6 6" stroke="#2c7a34" strokeWidth="2" /></Icon></button>
                    <button aria-label="저장"><Icon><path d="M3 3h10v10H3z" fill="#5a7090" stroke="#333" /><path d="M5 3h6v4H5zM6 9h4v4H6z" fill="white" /></Icon></button>
                    <button aria-label="분할 차트" className="border border-[#666] bg-white"><Icon size="size-3.5"><path d="M2 2h12v12H2zM8 2v12M8 8h6" stroke="#333" /><path d="M3 11l3-6 2 3M10 5l4-2" stroke="#d02020" /></Icon></button>
                    <button aria-label="차트 보기"><Icon><path d="M2 2h12v12H2zM2 8h12" stroke="#333" fill="white" /><path d="M3 6l3-2 3 2 4-3M3 12l3-1 3 1 4-1" stroke="#d02020" /></Icon></button>
                    <button aria-label="이전"><Icon><path d="M4 8l4-3v2h4v2H8v2z" fill="#444" stroke="#444" /></Icon></button>
                    <button aria-label="좌표"><Icon><path d="M4 3v9h8" stroke="#1a1a7a" strokeWidth="2" /></Icon></button>
                    <button aria-label="다음"><Icon><path d="M12 8L8 5v2H4v2h4v2z" fill="#444" stroke="#444" /></Icon></button>
                    <button aria-label="차트 도구"><Icon><path d="M2 1v13h13M3 12l4-7 3 3" stroke="#333" /><path d="M3 9l5-5" stroke="#d02020" /><path d="M7 3h7v3h-2v6h-3V6H7z" fill="#6aa0a0" stroke="#333" /></Icon></button>
                </div>
            </div>
        </div>
    );
}

function Scroller({ active }) {
    return (
        <div className="flex flex-col h-6 border border-[#777] bg-[#f4f4f4] text-[7px]">
            <button aria-label="위로" className="flex-1 leading-none border-b border-[#777] text-[#888]">▲</button>
            <button aria-label="아래로" className={`flex-1 leading-none ${active ? 'text-[#2f4f7f]' : 'text-[#888]'}`}>▼</button>
        </div>
    );
}

export default function App() {
    return (
        <div className="flex flex-col min-h-screen bg-[#dddbd7] border-l border-r border-b border-[#6a6a6a] text-black leading-none font-['Noto_Sans_CJK_KR',sans-serif] [font-feature-settings:'hwid']">
            <TitleBar />
            <div className="flex flex-col flex-1 m-[3px] border border-[#a8a6a2]">
                <Toolbar />
                <QuoteBar />
                <main className="flex flex-1 pt-0.5 pb-[3px]">
                    <Sidebar />
                    <section className="relative flex flex-col flex-1 ml-0.5 border border-[#7c7c88] bg-[#f0f0f0]">
                        <StockChart />
                        <PaneButtons className="top-[5px]" />
                        <PaneButtons className="bottom-[153px]" />
                        <PaneButtons className="bottom-[82px]" />
                        <ChartFooter />
                    </section>
                    <nav aria-label="지표 도구" className="flex flex-col gap-1 w-7 shrink-0 ml-1">
                        <Scroller />
                        <div className="flex flex-col flex-1 border border-[#777] bg-[#f0f0f0]">
                            {INDICATORS.map(lines => (
                                <button key={lines.join('')} className="flex flex-col items-center justify-center h-[22px] bg-linear-to-r from-[#f6f6f6] to-[#d8dadc] text-[10px] leading-[10px] font-bold font-['Roboto','Noto_Sans_CJK_KR',sans-serif] [font-feature-settings:normal]">
                                    {lines.map(l => <span key={l}>{l}</span>)}
                                </button>
                            ))}
                        </div>
                    </nav>
                    <nav aria-label="그리기 도구" className="flex flex-col gap-1 w-7 shrink-0 mx-0.5">
                        <Scroller active />
                        <div className="flex flex-col flex-1 border border-[#777] bg-[#f0f0f0] [font-feature-settings:normal]">
                            {DRAW_TOOLS.map((t, i) => t
                                ? (
                                    <button key={t.name} aria-label={t.name} className={`relative flex items-center justify-center h-[22px] bg-linear-to-r from-[#fafafa] to-[#dcdcdc] ${i === 0 ? 'border border-[#888] rounded-sm' : ''}`}>
                                        <Icon>{t.icon}</Icon>
                                        {t.more && <span className="absolute right-0.5 bottom-0.5 border-l-4 border-b-4 border-l-transparent border-b-[#555]" />}
                                    </button>
                                )
                                : <hr key="line" className="h-0.5 my-px border-0 bg-[#999]" />)}
                        </div>
                    </nav>
                </main>
            </div>
        </div>
    );
}
